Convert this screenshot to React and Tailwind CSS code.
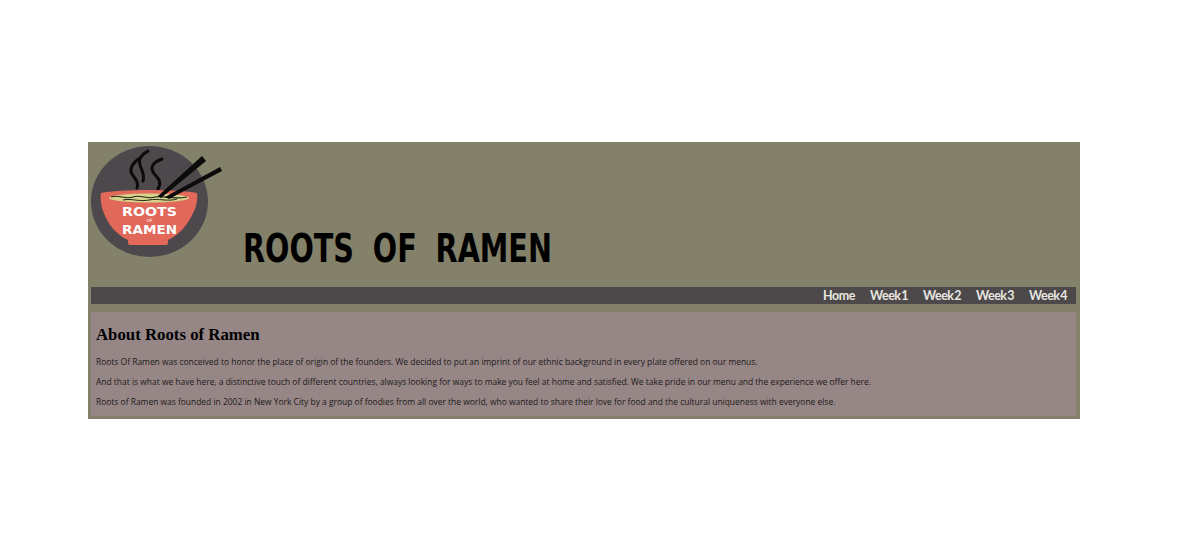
const navLinks = ["Home", "Week 1", "Week 2", "Week 3", "Week 4"];

const paragraphs = [
  "Roots Of Ramen was conceived to honor the place of origin of the founders. We decided to put an imprint of our ethnic background in every plate offered on our menus.",
  "And that is what we have here, a distinctive touch of different countries, always looking for ways to make you feel at home and satisfied. We take pride in our menu and the experience we offer here.",
  "Roots of Ramen was founded in 2002 in New York City by a group of foodies from all over the world, who wanted to share their love for food and the cultural uniqueness with everyone else.",
];

const Logo = () => (
  <svg width="136" height="116" viewBox="0 0 136 116" className="block shrink-0">
    <ellipse cx="58.5" cy="56.5" rx="58.5" ry="55.5" fill="#4d484b" />
    {/* steam */}
    <g fill="none" stroke="#0b0b0b" strokeWidth="3" strokeLinecap="round">
      <path d="M57 6 C50 10 47 15 49 20 C51 26 54 30 52 36" />
      <path d="M49 13 C42 17 38 24 41 29 C44 34 48 37 46 43" />
      <path d="M71 14 C63 17 59 21 62 27 C65 32 72 35 67 44" />
    </g>
    {/* bowl */}
    <path d="M10 48 C28 44 88 44 106 48 C107 52 106 60 103 66 C97 80 88 90 77 95 L77 98 Q77 100 74 100 L40 100 Q37 100 37 98 L37 95 C26 90 17 80 12 66 C10 60 9 52 10 48 Z" fill="#e2685a" />
    <ellipse cx="58" cy="53" rx="40" ry="4.5" fill="#d7d38a" />
    <path d="M20 52 C28 49 34 55 42 52 C50 49 56 55 64 52 C72 50 80 55 96 52" fill="none" stroke="#26281c" strokeWidth="1.2" />
    <path d="M32 55 C40 53 48 57 58 55 C68 53 76 57 86 54" fill="none" stroke="#26281c" strokeWidth="1" />
    {/* chopsticks */}
    <path d="M67 51 L111 11 L115 16 L70 53 Z" fill="#0b0b0b" />
    <path d="M74 52 L129 22 L131 26 L78 54 Z" fill="#0b0b0b" />
    <text x="31" y="71" textLength="55" lengthAdjust="spacingAndGlyphs" fill="#fff" fontSize="13" fontWeight="700" fontFamily="'DejaVu Sans', sans-serif">ROOTS</text>
    <text x="58.5" y="77" textAnchor="middle" fill="#fff" fontSize="4.5" fontFamily="'DejaVu Sans', sans-serif">OF</text>
    <text x="31" y="89" textLength="55" lengthAdjust="spacingAndGlyphs" fill="#fff" fontSize="13" fontWeight="700" fontFamily="'DejaVu Sans', sans-serif">RAMEN</text>
  </svg>
);

export default function App() {
  return (
    <div className="min-h-[546px] bg-white pt-[142px] pl-[88px] font-['Open_Sans',sans-serif]">
      <div className="w-[992px] bg-[#84816a] pl-[3px] pr-[4px] pb-[3px]">
        {/* Header */}
        <header className="flex h-[145px] pt-[3px]">
          <Logo />
          <h1 className="ml-[16px] mt-[81px] h-[46px] origin-left scale-x-[0.735] whitespace-nowrap font-['DejaVu_Sans',sans-serif] text-[39px] leading-[46px] font-bold text-black [word-spacing:12px]">
            ROOTS OF RAMEN
          </h1>
        </header>

        {/* Nav */}
        <nav className="flex h-[17px] items-center justify-end gap-[15px] bg-[#4d494b] pr-[9px]">
          {navLinks.map((link) => (
            <a key={link} href="#" className="font-['Lato',sans-serif] text-[12.5px] leading-[17px] font-bold tracking-[-0.45px] text-[#e8e6e0] [word-spacing:-2px]">
              {link}
            </a>
          ))}
        </nav>

        {/* About */}
        <main className="mt-[8px] h-[104px] bg-[#968686] px-[5px] pt-[13px]">
          <h2 className="font-['Liberation_Serif',serif] text-[16.8px] leading-[20px] font-bold text-black">
            About Roots of Ramen
          </h2>
          <div className="mt-[9px] flex flex-col gap-[5px]">
            {paragraphs.map((text) => (
              <p key={text} className="whitespace-nowrap text-[8.45px] leading-[15px] text-[#1d1a1a]">
                {text}
              </p>
            ))}
          </div>
        </main>
      </div>
    </div>
  );
}
